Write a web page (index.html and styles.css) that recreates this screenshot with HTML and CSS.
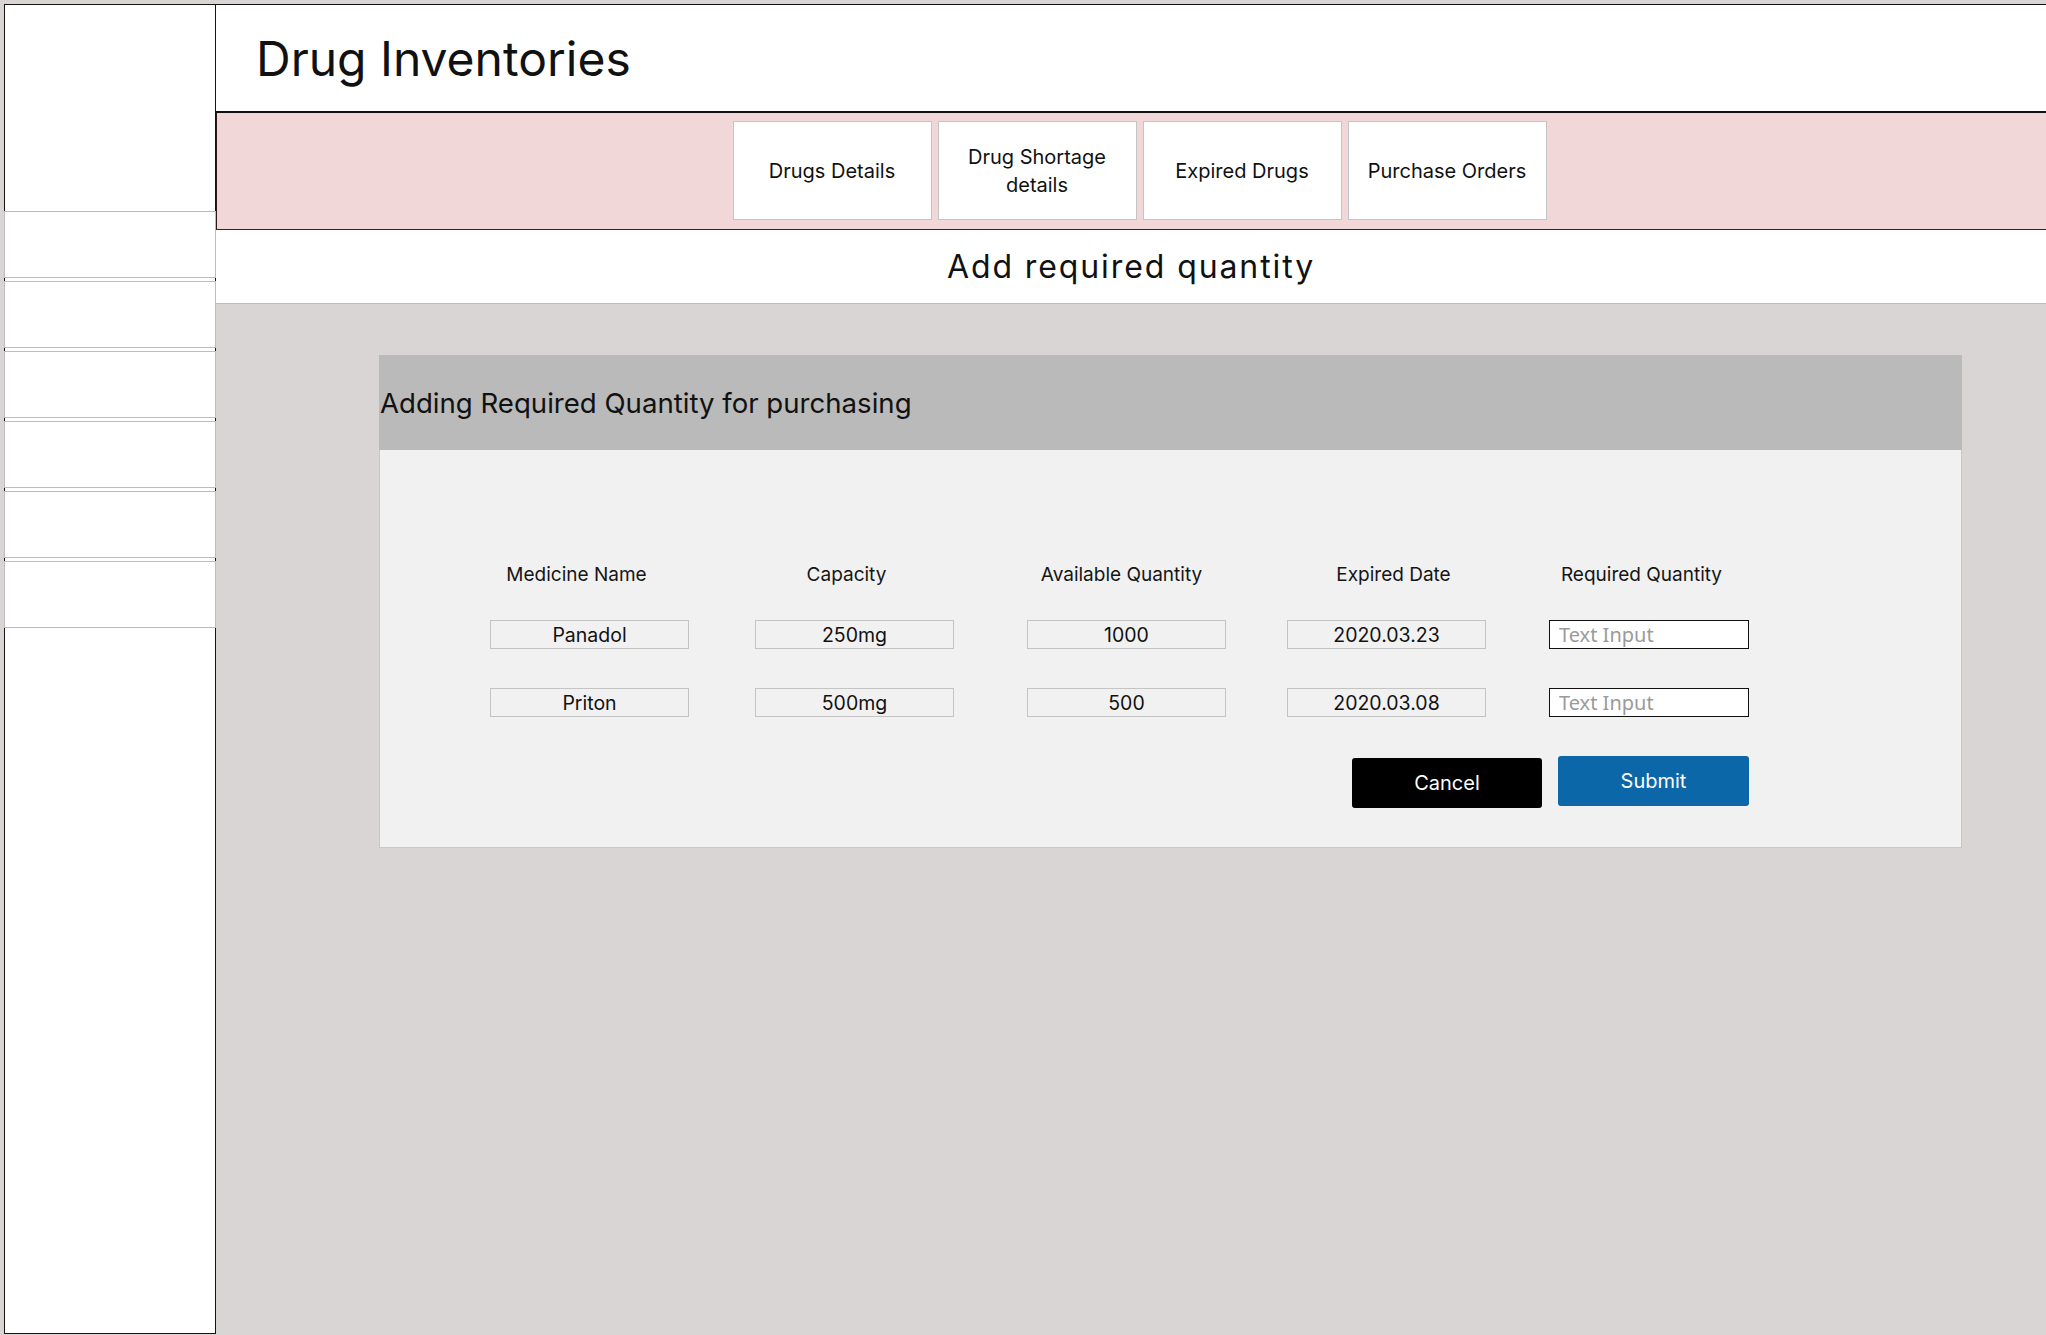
FILE: index.html
```html
<!DOCTYPE html>
<html lang="en">
<head>
<meta charset="utf-8">
<title>Drug Inventories</title>
<link rel="stylesheet" href="styles.css">
</head>
<body>
<div class="app">
  <aside class="sidebar">
    <div class="side-top"></div>
    <div class="side-item"></div>
    <div class="side-item"></div>
    <div class="side-item"></div>
    <div class="side-item"></div>
    <div class="side-item"></div>
    <div class="side-item"></div>
  </aside>
  <main class="main">
    <header class="topbar"><h1 class="title">Drug Inventories</h1></header>
    <nav class="tabs">
      <button class="tab">Drugs Details</button>
      <button class="tab">Drug Shortage details</button>
      <button class="tab">Expired Drugs</button>
      <button class="tab">Purchase Orders</button>
    </nav>
    <div class="subhead"><h2 class="subtitle">Add required quantity</h2></div>
    <section class="content">
      <div class="card">
        <div class="card-head">Adding Required Quantity for purchasing</div>
        <div class="card-body">
          <div class="grid">
            <div class="col-h h1">Medicine Name</div>
            <div class="col-h h2">Capacity</div>
            <div class="col-h h3">Available Quantity</div>
            <div class="col-h h4">Expired Date</div>
            <div class="col-h h5">Required Quantity</div>

            <div class="cell">Panadol</div>
            <div class="cell">250mg</div>
            <div class="cell">1000</div>
            <div class="cell">2020.03.23</div>
            <input class="qty" type="text" placeholder="Text Input">

            <div class="cell">Priton</div>
            <div class="cell">500mg</div>
            <div class="cell">500</div>
            <div class="cell">2020.03.08</div>
            <input class="qty" type="text" placeholder="Text Input">
          </div>
          <div class="actions">
            <button class="btn cancel">Cancel</button>
            <button class="btn submit">Submit</button>
          </div>
        </div>
      </div>
    </section>
  </main>
</div>
</body>
</html>
```

FILE: styles.css
```css
html, body {
  margin: 0;
  padding: 0;
}

body {
  background: #d9d5d4;
  font-family: Inter, "Noto Sans", sans-serif;
  color: #111;
}

.app {
  display: flex;
  height: 1335px;
  box-sizing: border-box;
  padding: 4px 0 1px 4px;
}

.sidebar {
  width: 212px;
  flex-shrink: 0;
  box-sizing: border-box;
  border: 1px solid #1a1212;
  background: #fff;
  display: flex;
  flex-direction: column;
}

.side-top {
  height: 206px;
}

.side-item {
  height: 67px;
  box-sizing: border-box;
  border: 1px solid #bdbdbd;
  margin: 0 -1px 3px;
  background: #fff;
}

.main {
  flex: 1;
  display: flex;
  flex-direction: column;
  min-width: 0;
}

.topbar {
  background: #fff;
  border-top: 1px solid #111;
  border-bottom: 2px solid #111;
  height: 106px;
  display: flex;
  align-items: center;
  padding-left: 40px;
}

.title {
  margin: 0;
  font-size: 48px;
  font-weight: 400;
  color: #111;
}

.tabs {
  background: #f2d7d8;
  border-left: 1px solid #2a1a1a;
  border-bottom: 1px solid #2a2a2a;
  padding: 8px 0 9px 16px;
  display: flex;
  justify-content: center;
  gap: 6px;
}

.tab {
  width: 199px;
  height: 99px;
  box-sizing: border-box;
  background: #fff;
  border: 1px solid #c4c4c4;
  padding: 0 12px;
  font-family: Inter, "Noto Sans", sans-serif;
  font-size: 20px;
  line-height: 28px;
  color: #111;
}

.subhead {
  background: #fff;
  height: 73px;
  border-bottom: 1px solid #bdbdbd;
  display: flex;
  align-items: center;
  justify-content: center;
}

.subtitle {
  margin: 0;
  font-size: 32px;
  font-weight: 400;
  letter-spacing: 1.9px;
  color: #111;
}

.content {
  padding: 51px 84px 0 163px;
}

.card-head {
  height: 95px;
  background: #bababa;
  display: flex;
  align-items: center;
  padding-left: 1px;
  font-size: 27.6px;
  color: #111;
}

.card-body {
  height: 398px;
  box-sizing: border-box;
  background: #f1f1f1;
  border: 1px solid #c8c8c8;
  border-top: none;
  padding: 116px 0 0 110px;
}

.grid {
  display: grid;
  grid-template-columns: 265px 272px 260px 262px 200px;
  row-gap: 39px;
}

.col-h {
  width: 199px;
  margin-bottom: -3px;
  text-align: center;
  font-size: 19px;
  line-height: 18px;
  color: #151515;
}

.h1 { margin-left: -13px; }
.h2 { margin-left: -8px; }
.h3 { margin-left: -5px; }
.h4 { margin-left: 7px; }
.h5 { margin-left: -7px; }

.cell {
  width: 199px;
  height: 29px;
  box-sizing: border-box;
  border: 1px solid #c4c4c4;
  text-align: center;
  font-size: 19.5px;
  line-height: 28px;
  color: #111;
}

.qty {
  width: 200px;
  height: 29px;
  box-sizing: border-box;
  margin: 0;
  border: 1px solid #111;
  border-radius: 0;
  background: #fff;
  padding: 0 9px;
  font-family: "Noto Sans", sans-serif;
  font-size: 20px;
  color: #111;
  outline: none;
}

.qty::placeholder {
  color: #9a9a9a;
}

.actions {
  width: 1259px;
  display: flex;
  justify-content: flex-end;
  align-items: flex-start;
  gap: 16px;
  margin-top: 39px;
}

.btn {
  height: 50px;
  border: none;
  border-radius: 3px;
  color: #fff;
  font-family: Inter, "Noto Sans", sans-serif;
  font-size: 20px;
}

.cancel {
  width: 190px;
  margin-top: 2px;
  background: #000;
}

.submit {
  width: 191px;
  background: #0b67a7;
}
```
